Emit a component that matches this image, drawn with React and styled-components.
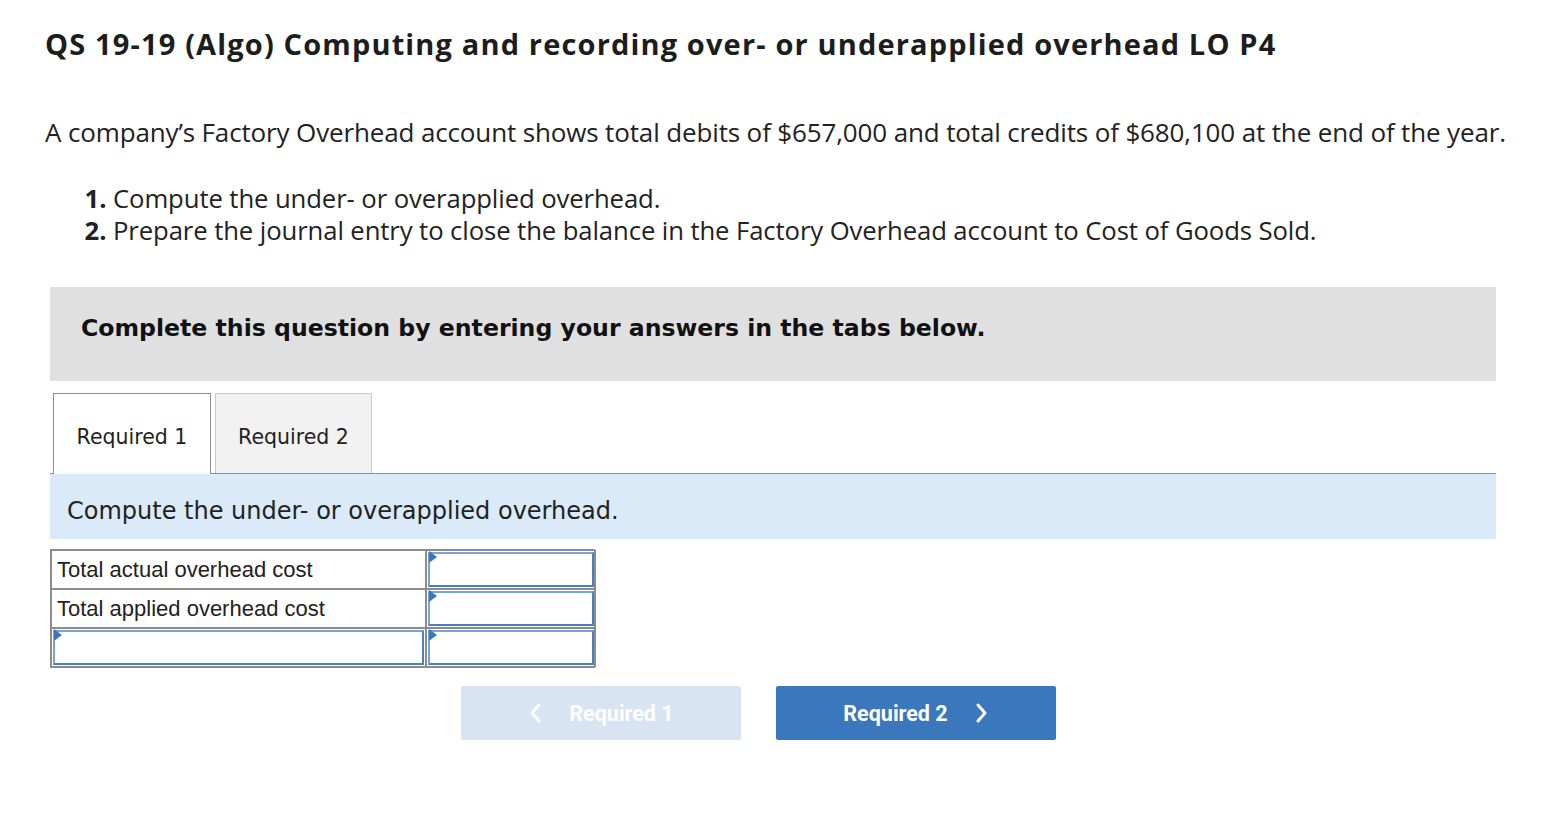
import React from "react";
import styled, { createGlobalStyle } from "styled-components";

const Global = createGlobalStyle`
  html, body { margin: 0; padding: 0; background: #fff; }
  body { font-family: "Open Sans", Lato, sans-serif; color: #222; }
`;

const Page = styled.div`
  padding: 26px 0 0 45px;
  width: 1480px;
`;

const Title = styled.h1`
  margin: 0;
  font-family: "Open Sans", sans-serif;
  font-weight: 700;
  font-size: 29px;
  line-height: 36px;
  color: #1d1d1d;
  letter-spacing: 1.15px;
  white-space: nowrap;
`;

const Intro = styled.p`
  margin: 53px 0 0;
  font-size: 26px;
  line-height: 34px;
  color: #222;
  white-space: nowrap;
  letter-spacing: -0.14px;
`;

const List = styled.ol`
  margin: 34px 0 0;
  padding-left: 68px;
  font-size: 25.7px;
  line-height: 32px;
  color: #222;
  letter-spacing: -0.1px;
  li::marker { font-weight: 700; }
`;

const Box = styled.div`
  margin: 40px 0 0 5px;
  width: 1446px;
`;

const Banner = styled.div`
  background: #e0e0e0;
  height: 94px;
  display: flex;
  align-items: center;
  padding: 0 0 12px 31px;
  font-family: "DejaVu Sans", Verdana, sans-serif;
  font-weight: 700;
  font-size: 23.6px;
  color: #111;
  box-sizing: border-box;
`;

const Tabs = styled.div`
  display: flex;
  align-items: flex-end;
  gap: 4px;
  height: 93px;
  box-sizing: border-box;
  padding-left: 3px;
  border-bottom: 1px solid #8f8f8f;
`;

const Tab = styled.div`
  width: ${p => (p.$active ? 158 : 157)}px;
  height: ${p => (p.$active ? 81 : 80)}px;
  margin-bottom: ${p => (p.$active ? "-1px" : "0")};
  padding-top: 6px;
  box-sizing: border-box;
  display: flex;
  align-items: center;
  justify-content: center;
  font-family: "DejaVu Sans", Verdana, sans-serif;
  font-size: 20.5px;
  color: #222;
  background: ${p => (p.$active ? "#fff" : "#f2f2f2")};
  border: 1px solid ${p => (p.$active ? "#8f8f8f" : "#c8c8c8")};
  border-bottom: none;
`;

const Info = styled.div`
  background: #daeaf8;
  height: 65px;
  display: flex;
  align-items: center;
  padding: 8px 0 0 17px;
  box-sizing: border-box;
  font-family: "DejaVu Sans", Verdana, sans-serif;
  font-size: 24px;
  color: #222;
`;

const Table = styled.div`
  margin-top: 10px;
  width: 545px;
  display: grid;
  grid-template-columns: 375px 170px;
  grid-auto-rows: 39px;
  border: 1px solid #8c8c8c;
  box-sizing: border-box;
`;

const LabelCell = styled.div`
  border: 1px solid #8c8c8c;
  display: flex;
  align-items: center;
  padding-left: 5px;
  font-family: "Liberation Sans", Arial, sans-serif;
  font-size: 22px;
  color: #222;
  box-sizing: border-box;
`;

const InputCell = styled.div`
  position: relative;
  border: 1px solid #8c8c8c;
  box-sizing: border-box;
  padding: 1px;
  &::before {
    content: "";
    display: block;
    width: 100%;
    height: 100%;
    box-sizing: border-box;
    border: 2px solid #4a7fc1;
    border-top-color: #7aa3d6;
    border-left-color: #7aa3d6;
    background: #fff;
  }
`;

const Flag = styled.span`
  position: absolute;
  left: 2px;
  top: 0px;
  width: 0;
  height: 0;
  border-top: 6px solid transparent;
  border-bottom: 6px solid transparent;
  border-left: 8px solid #3a78c2;
`;

const Nav = styled.div`
  display: flex;
  gap: 35px;
  margin: 18px 0 0 411px;
`;

const NavButton = styled.button`
  width: 280px;
  height: 54px;
  border: none;
  border-radius: 2px;
  display: flex;
  align-items: center;
  justify-content: center;
  gap: 27px;
  font-family: Roboto, "Liberation Sans", sans-serif;
  font-weight: 700;
  font-size: 21.5px;
  color: #fff;
  background: ${p => (p.$disabled ? "#d8e4f2" : "#3a77bc")};
  cursor: pointer;
  padding: 0;
`;

const Chev = ({ dir }) => (
  <svg width="14" height="22" viewBox="0 0 14 22" fill="none">
    <path
      d={dir === "left" ? "M11 3 L4 11 L11 19" : "M3 3 L10 11 L3 19"}
      stroke="#fff"
      strokeWidth="3"
      strokeLinecap="round"
      strokeLinejoin="round"
    />
  </svg>
);

function Input() {
  return (
    <InputCell>
      <Flag />
    </InputCell>
  );
}

export default function App() {
  return (
    <>
      <Global />
      <Page>
        <Title>QS 19-19 (Algo) Computing and recording over- or underapplied overhead LO P4</Title>
        <Intro>
          A company’s Factory Overhead account shows total debits of $657,000 and total credits of $680,100 at the end of the year.
        </Intro>
        <List>
          <li>Compute the under- or overapplied overhead.</li>
          <li>Prepare the journal entry to close the balance in the Factory Overhead account to Cost of Goods Sold.</li>
        </List>
        <Box>
          <Banner>Complete this question by entering your answers in the tabs below.</Banner>
          <Tabs>
            <Tab $active>Required 1</Tab>
            <Tab>Required 2</Tab>
          </Tabs>
          <Info>Compute the under- or overapplied overhead.</Info>
          <Table>
            <LabelCell>Total actual overhead cost</LabelCell>
            <Input />
            <LabelCell>Total applied overhead cost</LabelCell>
            <Input />
            <Input />
            <Input />
          </Table>
          <Nav>
            <NavButton $disabled>
              <Chev dir="left" />
              Required 1
            </NavButton>
            <NavButton>
              Required 2
              <Chev dir="right" />
            </NavButton>
          </Nav>
        </Box>
      </Page>
    </>
  );
}
